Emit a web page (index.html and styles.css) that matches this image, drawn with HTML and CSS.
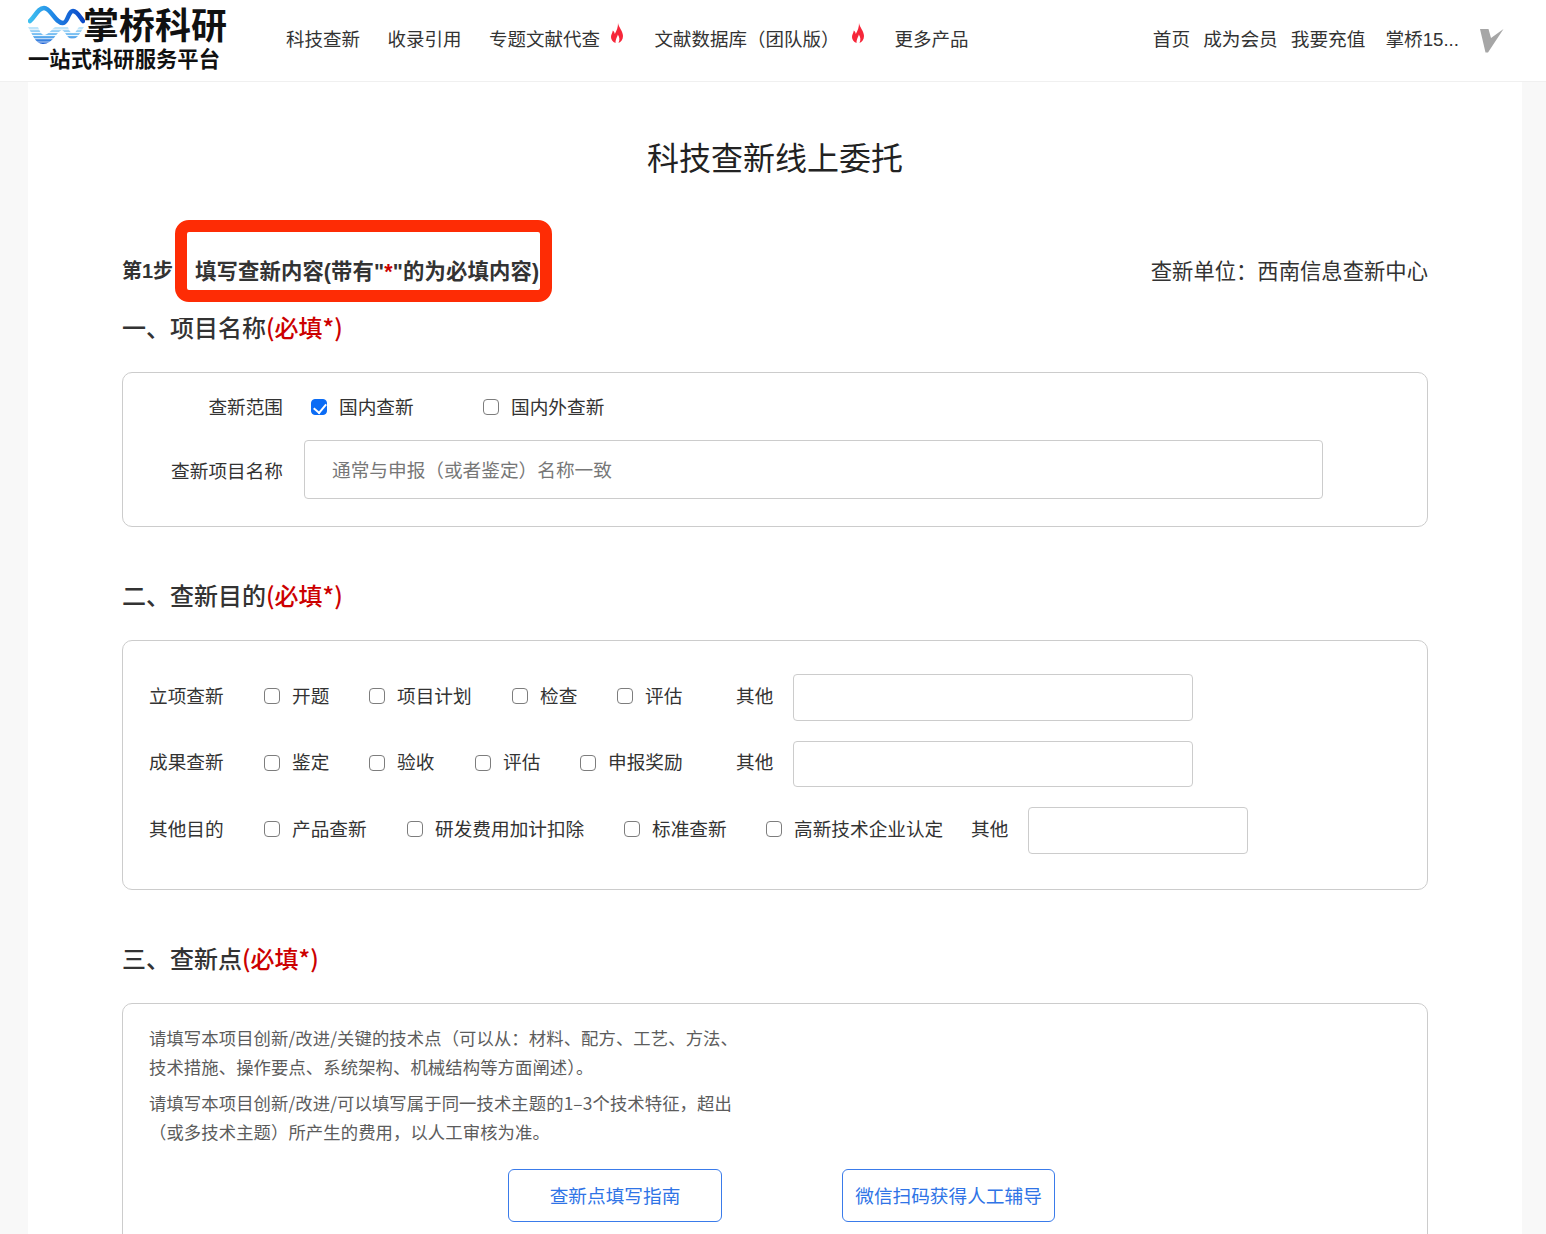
FILE: index.html
```html
<!DOCTYPE html>
<html lang="zh-CN">
<head>
  <meta charset="UTF-8">
  <title>科技查新线上委托</title>
  <link rel="stylesheet" href="styles.css">
</head>
<body>

  <header class="topbar">
    <a class="logo">
      <div class="logo-top">
        <svg class="logo-wave" width="57" height="40" viewBox="0 0 57 40">
          <defs>
            <linearGradient id="waveTop" x1="0" y1="0" x2="1" y2="0">
              <stop offset="0" stop-color="#3fc0f0"/>
              <stop offset=".45" stop-color="#1f86e6"/>
              <stop offset="1" stop-color="#0c49c8"/>
            </linearGradient>
            <linearGradient id="waveLow" x1="0" y1="0" x2="0" y2="1">
              <stop offset="0" stop-color="#c4e8fb"/>
              <stop offset=".55" stop-color="#66b4ef"/>
              <stop offset="1" stop-color="#0f55d2"/>
            </linearGradient>
            <pattern id="waveLines" width="4" height="3.200" patternUnits="userSpaceOnUse">
              <rect width="4" height="2.400" fill="#fff"/>
            </pattern>
            <mask id="waveMask">
              <rect width="57" height="40" fill="url(#waveLines)"/>
            </mask>
          </defs>
          <path d="M2 17 C7 13 10 4 16 4 C23 4 27 19 35 19 C40 19 40 7 45 7 C49 7 52 13 55 17" fill="none" stroke="url(#waveTop)" stroke-width="4.500" stroke-linecap="round"/>
          <path d="M0 23 H10 C12 28 14 31 16 31 C20 31 24 25 27 23 H40 C41 27 43 29 45 29 C48 29 49 25 51 23 H56 C52 28 50 36 43 35 C39 34 37 27 34 26 C29 27 25 40 15 40 C7 40 4 29 0 23 Z" fill="url(#waveLow)" mask="url(#waveMask)"/>
        </svg>
        <span class="logo-name">掌桥科研</span>
      </div>
      <div class="logo-sub">一站式科研服务平台</div>
    </a>

    <nav class="nav">
      <a>科技查新</a>
      <a>收录引用</a>
      <a class="hot">专题文献代查
        <svg class="flame" width="12" height="20" viewBox="0 0 12 20"><path d="M7 0 C7.500 4 12 8 12 13 C12 16.500 10 19 7.500 20 C9 17 8.500 14 6.800 11.500 C6.500 14 4.500 15.500 4.500 20 C1.500 19 0 16.500 0 14 C0 11.500 1.500 10 1.800 7.500 C3 8.500 3.600 9.500 3.800 11 C5.500 8 7.200 4 7 0 Z" fill="#f6273a"/></svg>
      </a>
      <a class="hot">文献数据库（团队版）
        <svg class="flame" width="12" height="20" viewBox="0 0 12 20"><path d="M7 0 C7.500 4 12 8 12 13 C12 16.500 10 19 7.500 20 C9 17 8.500 14 6.800 11.500 C6.500 14 4.500 15.500 4.500 20 C1.500 19 0 16.500 0 14 C0 11.500 1.500 10 1.800 7.500 C3 8.500 3.600 9.500 3.800 11 C5.500 8 7.200 4 7 0 Z" fill="#f6273a"/></svg>
      </a>
      <a>更多产品</a>
    </nav>

    <div class="user-links">
      <a>首页</a>
      <a>成为会员</a>
      <a>我要充值</a>
      <a class="user-name">掌桥15...</a>
      <svg class="vip" width="25" height="25" viewBox="0 0 25 25"><path d="M1 1 L9.500 1 L12 10 L24.500 1 L9 24.500 L6.500 24.500 Z" fill="#a6a6a6"/></svg>
    </div>
  </header>

  <main class="page">
    <h1 class="page-title">科技查新线上委托</h1>

    <div class="step-row">
      <div class="step">
        <span class="step-no">第1步</span>
        <span class="step-box">填写查新内容(带有"<em>*</em>"的为必填内容)</span>
      </div>
      <div class="unit">查新单位：西南信息查新中心</div>
    </div>

    <h2 class="sec-title first">一、项目名称<span class="must">(必填*)</span></h2>
    <section class="card card-name">
      <div class="name-row">
        <label class="name-label">查新范围</label>
        <label class="check scope-a"><input type="checkbox" checked>国内查新</label>
        <label class="check"><input type="checkbox">国内外查新</label>
      </div>
      <div class="name-row name-row-input">
        <label class="name-label">查新项目名称</label>
        <input class="text-input project-input" type="text" placeholder="通常与申报（或者鉴定）名称一致">
      </div>
    </section>

    <h2 class="sec-title">二、查新目的<span class="must">(必填*)</span></h2>
    <section class="card card-purpose">
      <div class="purpose-row">
        <span class="purpose-label">立项查新</span>
        <label class="check w-105"><input type="checkbox">开题</label>
        <label class="check w-143"><input type="checkbox">项目计划</label>
        <label class="check w-105"><input type="checkbox">检查</label>
        <label class="check w-119"><input type="checkbox">评估</label>
        <span class="other-label">其他</span>
        <input class="text-input other-input" type="text">
      </div>
      <div class="purpose-row">
        <span class="purpose-label">成果查新</span>
        <label class="check w-105"><input type="checkbox">鉴定</label>
        <label class="check w-106"><input type="checkbox">验收</label>
        <label class="check w-105"><input type="checkbox">评估</label>
        <label class="check w-156"><input type="checkbox">申报奖励</label>
        <span class="other-label">其他</span>
        <input class="text-input other-input" type="text">
      </div>
      <div class="purpose-row">
        <span class="purpose-label">其他目的</span>
        <label class="check w-143"><input type="checkbox">产品查新</label>
        <label class="check w-217"><input type="checkbox">研发费用加计扣除</label>
        <label class="check w-142"><input type="checkbox">标准查新</label>
        <label class="check w-205"><input type="checkbox">高新技术企业认定</label>
        <span class="other-label">其他</span>
        <input class="text-input other-input short" type="text">
      </div>
    </section>

    <h2 class="sec-title">三、查新点<span class="must">(必填*)</span></h2>
    <section class="card card-points">
      <p class="hint">请填写本项目创新/改进/关键的技术点（可以从：材料、配方、工艺、方法、<br>技术措施、操作要点、系统架构、机械结构等方面阐述）。</p>
      <p class="hint">请填写本项目创新/改进/可以填写属于同一技术主题的1–3个技术特征，超出<br>（或多技术主题）所产生的费用，以人工审核为准。</p>
      <div class="btn-row">
        <a class="btn">查新点填写指南</a>
        <a class="btn btn-wechat">微信扫码获得人工辅导</a>
      </div>
    </section>
  </main>

</body>
</html>
```

FILE: styles.css
```css
* {
  box-sizing: border-box;
}
html, body {
  height: 1234px;
  overflow: hidden;
}
body {
  margin: 0;
  background: #f8f8f8;
  color: #333;
  font-family: "Liberation Sans", "Noto Sans CJK SC", sans-serif;
  font-size: 18.67px;
}

/* top bar */
.topbar {
  display: flex;
  align-items: flex-start;
  height: 82px;
  background: #fff;
  border-bottom: 1px solid #f0f0f0;
  padding-left: 28px;
}
.logo {
  width: 258px;
  color: #111;
  font-weight: 700;
}
.logo-top {
  display: flex;
  align-items: center;
  height: 45px;
  padding-top: 9px;
}
.logo-wave {
  flex: none;
  margin: -7px -2px 0 0;
}
.logo-name {
  font-size: 36px;
  line-height: 36px;
  white-space: nowrap;
}
.logo-sub {
  font-size: 21.33px;
  line-height: 26px;
  margin-top: 2px;
  white-space: nowrap;
}
.nav {
  display: flex;
  gap: 27.5px;
  padding-top: 26px;
  font-size: 18.5px;
  line-height: 28px;
}
.nav a {
  white-space: nowrap;
}
.hot {
  display: flex;
  align-items: flex-start;
}
.hot .flame {
  margin: -3px 0 0 11px;
}
.nav .hot + .hot {
  margin-left: 4px;
}
.nav .hot + .hot .flame {
  margin-left: 12px;
}
.nav .hot + a:not(.hot) {
  margin-left: 3.5px;
}
.user-links {
  display: flex;
  align-items: flex-start;
  gap: 13px;
  margin-left: auto;
  padding: 26px 42px 0 0;
  line-height: 28px;
}
.user-name {
  margin-left: 7px;
}
.vip {
  margin: 2px 0 0 7px;
}

/* page */
.page {
  width: 1494px;
  height: 1152px;
  margin-left: 28px;
  padding: 0 94px;
  background: #fff;
  overflow: hidden;
}
.page-title {
  margin: 0;
  padding-top: 53px;
  text-align: center;
  font-size: 32px;
  line-height: 48px;
  font-weight: 400;
  color: #222;
}
.step-row {
  display: flex;
  justify-content: space-between;
  align-items: center;
  margin-top: 37px;
  height: 82px;
  font-size: 21.33px;
}
.step {
  display: flex;
  align-items: center;
  font-weight: 700;
}
.step-no {
  width: 50px;
  padding-top: 16px;
  font-size: 20px;
  white-space: nowrap;
}
.step-box {
  display: block;
  margin-left: 3px;
  padding: 24px 0 0 8px;
  width: 377px;
  height: 82px;
  line-height: 32px;
  letter-spacing: .15px;
  border: 12px solid #fe2c05;
  border-radius: 14px;
  white-space: nowrap;
}
.step-box em {
  font-style: normal;
  color: #c00;
}
.unit {
  padding-top: 16px;
}
.sec-title {
  margin: 50px 0 0;
  font-family: "Noto Sans CJK SC", sans-serif;
  font-size: 24px;
  line-height: 36px;
  font-weight: 500;
}
.sec-title.first {
  margin-top: 7px;
}
.must {
  color: #c00;
}

/* cards */
.card {
  margin-top: 27px;
  border: 1px solid #ccc;
  border-radius: 10px;
  background: #fff;
}
.card-name {
  height: 155px;
}
.name-row {
  display: flex;
  align-items: center;
  height: 28px;
  margin-top: 18px;
}
.name-row-input {
  height: 59px;
  margin-top: 21px;
}
.name-label {
  width: 160px;
  text-align: right;
}
.scope-a {
  width: 172px;
  margin-left: 28px;
}
.check {
  display: flex;
  align-items: center;
  white-space: nowrap;
}
.check input {
  appearance: none;
  flex: none;
  position: relative;
  width: 16px;
  height: 16px;
  margin: 4px 12px 0 0;
  border: 1px solid #7d7d7d;
  border-radius: 4px;
  background: #fff;
}
.check input:checked {
  border-color: #0b6cf5;
  background-color: #0b6cf5;
}
.check input:checked::after {
  content: "";
  position: absolute;
  left: 4px;
  top: 1px;
  width: 6px;
  height: 10px;
  border: solid #fff;
  border-width: 0 2.5px 2.5px 0;
  transform: rotate(40deg);
}
.text-input {
  height: 46.5px;
  border: 1px solid #ccc;
  border-radius: 4px;
  font: inherit;
  color: #333;
  padding: 0 27px;
  background: #fff;
}
.text-input::placeholder {
  color: #777;
  opacity: 1;
}
.project-input {
  width: 1019px;
  height: 59px;
  margin-left: 21px;
  padding-top: 2px;
}
.card-purpose {
  height: 250px;
  padding: 33px 0 0 26px;
}
.purpose-row {
  display: flex;
  align-items: center;
  height: 46.5px;
  margin-bottom: 20px;
}
.purpose-label,
.other-label,
.purpose-row .check {
  padding-bottom: 6px;
}
.purpose-label {
  width: 115px;
  white-space: nowrap;
}
.w-105 { width: 105px; }
.w-106 { width: 106px; }
.w-143 { width: 143px; }
.w-119 { width: 119px; }
.w-156 { width: 156px; }
.w-217 { width: 217px; }
.w-142 { width: 142px; }
.w-205 { width: 205px; }
.other-label {
  width: 57px;
  white-space: nowrap;
}
.other-input {
  width: 400px;
}
.other-input.short {
  width: 220px;
}
.card-points {
  height: 300px;
  padding: 19px 26px 0;
}
.hint {
  margin: 0 0 7px;
  font-family: "Noto Sans CJK SC", sans-serif;
  font-size: 17.33px;
  line-height: 29px;
  letter-spacing: .1px;
  color: #5c5c5c;
  white-space: nowrap;
}
.btn-row {
  display: flex;
  gap: 120px;
  margin: 23px 0 0 359px;
}
.btn {
  display: flex;
  align-items: center;
  justify-content: center;
  width: 214px;
  height: 53px;
  padding-bottom: 2px;
  border: 1px solid #3a7bea;
  border-radius: 6px;
  color: #2f74e6;
  white-space: nowrap;
}
.btn-wechat {
  width: 213px;
}
```
